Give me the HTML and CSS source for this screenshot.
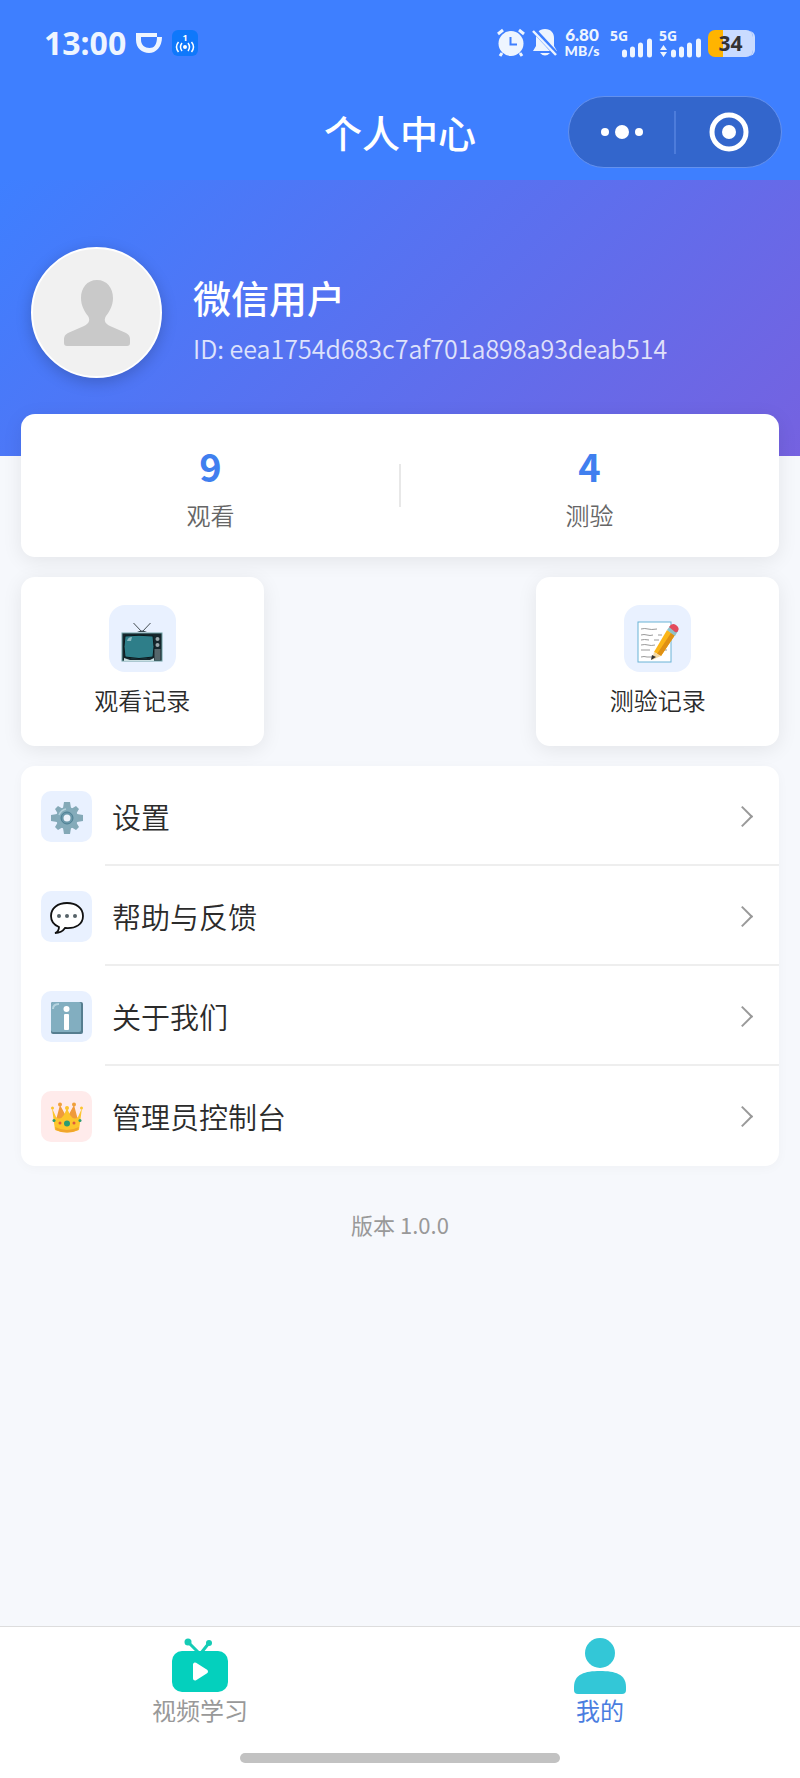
FILE: index.html
```
<!DOCTYPE html>
<html lang="zh-CN">
<head>
    <meta charset="UTF-8">
    <meta name="viewport" content="width=device-width, initial-scale=1.0">
    <title>个人中心</title>
    <link rel="stylesheet" href="styles.css">
</head>
<body>
    <header class="top-bar">
        <div class="status-bar">
            <div class="status-left">
                <span class="clock">13:00</span>
                <svg width="26" height="20" viewBox="0 0 26 20" aria-hidden="true">
                    <path d="M0 0h21v4H5v3c0 5 4 8 8.500 8S21 12 21 4h5c0 10-6 16-13 16S0 15 0 7z" fill="#eef5ff"/>
                </svg>
                <svg class="hotspot" width="26" height="26" viewBox="0 0 26 26" aria-hidden="true">
                    <rect width="26" height="26" rx="6" fill="#0f78fb"/>
                    <text x="13" y="11" text-anchor="middle">1</text>
                    <circle cx="13" cy="17" r="2" fill="#fff"/>
                    <path d="M10 13q-3 4 0 8M16 13q3 4 0 8M6.500 12q-4 5 0 10M19.500 12q4 5 0 10" fill="none" stroke="#fff" stroke-width="1.500"/>
                </svg>
            </div>
            <div class="status-right">
                <svg width="30" height="30" viewBox="0 0 30 30" aria-hidden="true">
                    <circle cx="15" cy="15.500" r="12.500" fill="#eef5ff"/>
                    <path d="M2 6l5-4M28 6l-5-4M6 25l-2 3M24 25l2 3" stroke="#eef5ff" stroke-width="3"/>
                    <path d="M14.500 9v7.500H21" fill="none" stroke="#3e7fff" stroke-width="2"/>
                </svg>
                <svg width="26" height="30" viewBox="0 0 26 30" aria-hidden="true">
                    <path d="M13 1c-6 0-9 4-9 9v8l-3 5h24l-3-5v-8c0-5-3-9-9-9zM8 25h10q-5 5-10 0z" fill="#eef5ff"/>
                    <path d="M1 1l25 27" stroke="#3e7fff" stroke-width="5"/>
                    <path d="M1 3l23 24" stroke="#eef5ff" stroke-width="2.500"/>
                </svg>
                <div class="net-speed"><span>6.80</span><small>MB/s</small></div>
                <svg class="signal" width="42" height="30" viewBox="0 0 42 30" aria-hidden="true">
                    <text x="0" y="13">5G</text>
                    <path d="M14.500 24v3M22.500 21v6M30.500 17v10M39.500 13v14" stroke="#eef5ff" stroke-width="5" stroke-linecap="round"/>
                </svg>
                <svg class="signal" width="42" height="30" viewBox="0 0 42 30" aria-hidden="true">
                    <text x="0" y="13">5G</text>
                    <path d="M1 22l3.500-5 3.500 5zM1 24l3.500 5 3.500-5z" fill="#eef5ff"/>
                    <path d="M14.500 24v3M22.500 21v6M30.500 17v10M39.500 13v14" stroke="#eef5ff" stroke-width="5" stroke-linecap="round"/>
                </svg>
                <div class="battery">34</div>
            </div>
        </div>
        <div class="nav-bar">
            <h1>个人中心</h1>
            <div class="capsule">
                <button type="button" aria-label="更多">
                    <svg width="44" height="40" viewBox="0 0 44 40"><g fill="#fff"><circle cx="5" cy="20" r="4"/><circle cx="22" cy="20" r="7"/><circle cx="39" cy="20" r="4"/></g></svg>
                </button>
                <button type="button" aria-label="关闭">
                    <svg width="40" height="40" viewBox="0 0 40 40"><circle cx="20" cy="20" r="17" fill="none" stroke="#fff" stroke-width="5"/><circle cx="20" cy="20" r="7" fill="#fff"/></svg>
                </button>
            </div>
        </div>
    </header>

    <main>
        <section class="profile">
            <div class="avatar">
                <svg width="66" height="66" viewBox="0 0 66 66" aria-hidden="true">
                    <path d="M33 0c-10 0-16 8-16 18 0 8 4 14 7 18 3 5 0 8-4 10L4 53q-4 2-4 6v4q0 3 3 3h60q3 0 3-3v-4q0-4-4-6l-16-7c-4-2-7-5-4-10 3-4 7-10 7-18C49 8 43 0 33 0z" fill="#c9c9c9"/>
                </svg>
            </div>
            <div class="user-info">
                <h2>微信用户</h2>
                <p>ID: eea1754d683c7af701a898a93deab514</p>
            </div>
        </section>

        <section class="stats card">
            <div class="stat"><strong>9</strong><span>观看</span></div>
            <div class="stat"><strong>4</strong><span>测验</span></div>
        </section>

        <section class="shortcuts">
            <a href="#watch" class="shortcut card">
                <span class="shortcut-icon">
                    <svg width="42" height="42" viewBox="0 0 42 42" aria-hidden="true">
                        <path d="M12.500 2L21 11l8.500-9" fill="none" stroke="#444d52" stroke-width="1"/>
                        <path d="M16 11q5-3 10 0z" fill="#37474f"/>
                        <rect x="1" y="12" width="40" height="28" fill="#16262c" stroke="#6fa0a3"/>
                        <path d="M3 40v-3l6 2h20l4-2v3z" fill="#c9dfe2"/>
                        <path d="M4 15q14-1.500 28 0 2 11 0 21-14 3-28 0-2-10 0-21z" fill="#2e7e89" stroke="#0c171b"/>
                        <path d="M6 20q1-4 5-4l-1 4z" fill="#8abbc2"/>
                        <rect x="33.500" y="28" width="6" height="11" fill="#56666b"/>
                        <circle cx="36.500" cy="18" r="2" fill="#9aa8ac"/>
                        <circle cx="36.500" cy="24" r="2" fill="#9aa8ac"/>
                    </svg>
                </span>
                <span>观看记录</span>
            </a>
            <a href="#quiz" class="shortcut card">
                <span class="shortcut-icon">
                    <svg width="42" height="42" viewBox="0 0 42 42" aria-hidden="true">
                        <rect x="1" y="1" width="33" height="40" fill="#fff" stroke="#6bb3d6"/>
                        <path d="M4 8q4-1 7 0t9 0M4 14q3-1 6 0t6 0M21 14h4M4 19q3-1 8 0M17 19h5M4 24q4-1 7 0t7 0M4 29h9M24 29h6M4 36q3-1 6 0h5" fill="none" stroke="#9a9a9a" stroke-width="1"/>
                        <path d="M17 31L30 9l8 5-14 21z" fill="#fbb518"/>
                        <path d="M20 33L34 12l4 2-14 21z" fill="#df9014"/>
                        <path d="M17 31l7 4-9 4z" fill="#f3d9a4"/>
                        <path d="M15 34l4 2-5 3z" fill="#333"/>
                        <path d="M30 9l3-4 8 5-3 5z" fill="#8fc1c8"/>
                        <path d="M32 6q3-5 7-2t2 6q-1 2-3 1z" fill="#e34b5d"/>
                    </svg>
                </span>
                <span>测验记录</span>
            </a>
        </section>

        <nav class="menu card">
            <a href="#settings" class="menu-item">
                <span class="menu-icon">
                    <svg width="32" height="32" viewBox="0 0 32 32" aria-hidden="true">
                        <path d="M13 0h6l1 6h-8zM13 32h6l1-6h-8zM0 13v6l6 1v-8zM32 13v6l-6 1v-8zM4 7l3-3 5 3-5 5zM28 7l-3-3-5 3 5 5zM4 25l3 3 5-3-5-5zM28 25l-3 3-5-3 5-5z" fill="#84a9b7"/>
                        <circle cx="16" cy="16" r="11" fill="#84abba"/>
                        <circle cx="16" cy="16" r="6" fill="#6b98aa" stroke="#4d7f93" stroke-width="1"/>
                        <path d="M8 13q2-5 7-6" fill="none" stroke="#b4d0db" stroke-width="1.500"/>
                        <circle cx="16" cy="16" r="3.500" fill="#eef3fb"/>
                    </svg>
                </span>
                <span class="menu-label">设置</span>
            </a>
            <a href="#feedback" class="menu-item">
                <span class="menu-icon">
                    <svg width="34" height="34" viewBox="0 0 34 34" aria-hidden="true">
                        <path d="M17 2C8 2 1 7 1 15c0 6 3 9 8 11 0 3-1 5-4 6 5 0 8-2 10-5 11 1 18-4 18-12S26 2 17 2z" fill="#fff" stroke="#111" stroke-width="1.800"/>
                        <g fill="#566268"><circle cx="9" cy="15" r="2"/><circle cx="17" cy="15" r="2"/><circle cx="25" cy="15" r="2"/></g>
                    </svg>
                </span>
                <span class="menu-label">帮助与反馈</span>
            </a>
            <a href="#about" class="menu-item">
                <span class="menu-icon">
                    <svg width="32" height="32" viewBox="0 0 32 32" aria-hidden="true">
                        <rect width="32" height="32" rx="2" fill="#557d8f"/>
                        <rect width="30" height="30" rx="2" fill="#82aec0"/>
                        <path d="M2 7q0-5 6-5" fill="none" stroke="#b5d3df" stroke-width="2"/>
                        <circle cx="15.500" cy="7" r="3" fill="#fff"/>
                        <rect x="13" y="12" width="5" height="16" rx="1" fill="#fff"/>
                    </svg>
                </span>
                <span class="menu-label">关于我们</span>
            </a>
            <a href="#admin" class="menu-item">
                <span class="menu-icon admin">
                    <svg width="32" height="32" viewBox="0 0 32 32" aria-hidden="true">
                        <path d="M5 18L9 3l6 11v4zM17 18v-4l6-11 4 15z" fill="#ef9a3a"/>
                        <path d="M1 6l4 9q4 4 8-2l3-7 3 7q4 6 8 2l4-9-3 22q-12 5-24 0z" fill="#fcc52c"/>
                        <path d="M4 25q12 6 24 0l-1 3q-11 5-22 0z" fill="#f1a52c"/>
                        <g fill="#f0a03a"><circle cx="9" cy="2.500" r="2"/><circle cx="23" cy="2.500" r="2"/></g>
                        <g fill="#fcc52c"><circle cx="1.500" cy="6" r="1.500"/><circle cx="30.500" cy="6" r="1.500"/><circle cx="16" cy="6" r="2"/></g>
                        <g fill="#2b9c72"><circle cx="16" cy="21.500" r="3"/><circle cx="3" cy="18.500" r="1.500"/><circle cx="29" cy="18.500" r="1.500"/></g>
                        <g fill="#dd5a3e"><circle cx="9" cy="21" r="1.500"/><circle cx="23" cy="21" r="1.500"/></g>
                    </svg>
                </span>
                <span class="menu-label">管理员控制台</span>
            </a>
        </nav>

        <p class="version">版本 1.0.0</p>
    </main>

    <footer class="tab-bar">
        <nav class="tabs">
            <a href="#videos" class="tab">
                <svg width="56" height="56" viewBox="0 0 56 56" aria-hidden="true">
                    <path d="M16 4l11 11M37 5l-8 10" stroke="#15cbb5" stroke-width="3"/>
                    <circle cx="16" cy="4" r="3.500" fill="#15cbb5"/>
                    <circle cx="37" cy="5" r="3" fill="#15cbb5"/>
                    <rect y="13" width="56" height="41" rx="10" fill="#04d0bd"/>
                    <path d="M23 26.500v14l11-7z" fill="#fff" stroke="#fff" stroke-width="4" stroke-linejoin="round"/>
                </svg>
                <span>视频学习</span>
            </a>
            <a href="#mine" class="tab active">
                <svg width="56" height="56" viewBox="0 0 56 56" aria-hidden="true">
                    <circle cx="28" cy="15" r="15" fill="#33c7d7"/>
                    <path d="M28 33c15 0 26 3 26 16v3q0 4-4 4H6q-4 0-4-4v-3c0-13 11-16 26-16z" fill="#33c7d7"/>
                </svg>
                <span>我的</span>
            </a>
        </nav>
        <div class="home-indicator"></div>
    </footer>
</body>
</html>
```
FILE: styles.css
```
:root {
    --primary: #3e7fff;
    --page-bg: #f6f8fc;
    --icon-bg: #e9f1ff;
    --text-main: #2b2b2b;
    --text-sub: #666666;
    --text-muted: #999999;
    --status-fg: #eef5ff;
    --radius: 14px;
    --gutter: 21px;
}

* {
    margin: 0;
    padding: 0;
    box-sizing: border-box;
}

body {
    font-family: 'Noto Sans CJK SC', sans-serif;
    min-height: 100vh;
    display: flex;
    flex-direction: column;
    background: var(--page-bg);
    color: var(--text-main);
}

a {
    color: inherit;
    text-decoration: none;
}

svg {
    display: block;
    flex-shrink: 0;
    overflow: visible;
}

/* Status bar and title */
.top-bar {
    background: var(--primary);
    color: #ffffff;
}

.status-bar {
    height: 86px;
    padding: 0 47px 0 44px;
    display: flex;
    align-items: center;
    justify-content: space-between;
    font-family: 'Noto Sans', sans-serif;
    font-weight: 700;
    color: var(--status-fg);
}

.status-left {
    display: flex;
    align-items: center;
    gap: 10px;
}

.clock {
    font-size: 32px;
    line-height: 40px;
}

.hotspot text {
    font-size: 9px;
    fill: #ffffff;
}

.status-right {
    display: flex;
    align-items: center;
    gap: 6px;
}

.net-speed {
    width: 36px;
    margin-right: 4px;
    display: flex;
    flex-direction: column;
    align-items: center;
    font-family: Lato, sans-serif;
    font-weight: 900;
    font-size: 17px;
    line-height: 16px;
}

.net-speed small {
    font-size: 14px;
}

.signal {
    margin-right: 1px;
}

.signal text {
    font-size: 14px;
    fill: var(--status-fg);
}

.battery {
    width: 45px;
    height: 27px;
    border-radius: 7px;
    background: linear-gradient(90deg, #ffb400 15px, #c9dbff 15px);
    box-shadow: 3px 0 0 -1px #c9dbff;
    color: #333333;
    font-size: 21px;
    line-height: 27px;
    text-align: center;
}

.nav-bar {
    height: 94px;
    padding: 0 18px 2px;
    display: grid;
    grid-template-columns: 1fr auto 1fr;
    align-items: center;
}

.nav-bar h1 {
    grid-column: 2;
    font-size: 38px;
    line-height: 56px;
    font-weight: 500;
}

.capsule {
    justify-self: end;
    width: 214px;
    height: 72px;
    display: flex;
    align-items: center;
    border: 1px solid #6491ee;
    border-radius: 36px;
    background: #3366cc;
}

.capsule button {
    flex: 1;
    height: 43px;
    display: flex;
    align-items: center;
    justify-content: center;
    border: none;
    background: none;
    cursor: pointer;
}

.capsule button + button {
    border-left: 2px solid #4d7cdb;
}

/* Profile header */
main {
    flex: 1;
}

.profile {
    padding: 67px 31px 78px;
    display: flex;
    gap: 31px;
    background: linear-gradient(135deg, #3e7fff 0%, #7562e0 100%);
    color: #ffffff;
}

.avatar {
    width: 131px;
    height: 131px;
    flex-shrink: 0;
    display: flex;
    align-items: center;
    justify-content: center;
    border: 2px solid #ffffff;
    border-radius: 50%;
    background: #f1f1f1;
    box-shadow: 0 4px 16px rgba(0, 0, 0, 0.2);
}

.user-info {
    padding-top: 22px;
}

.user-info h2 {
    font-size: 38px;
    line-height: 56px;
    font-weight: 500;
}

.user-info p {
    font-size: 25px;
    line-height: 46px;
    font-weight: 350;
    opacity: 0.8;
}

/* Cards */
.card {
    background: #ffffff;
    border-radius: var(--radius);
    box-shadow: 0 4px 20px rgba(0, 0, 0, 0.08);
}

.stats {
    position: relative;
    margin: -42px var(--gutter) 0;
    padding: 28px 0 17px;
    display: flex;
}

.stat {
    flex: 1;
    display: flex;
    flex-direction: column;
    align-items: center;
}

.stat strong {
    font-size: 38px;
    line-height: 48px;
    color: #407fef;
}

.stat span {
    font-size: 24px;
    line-height: 50px;
    font-weight: 350;
    color: var(--text-sub);
}

/* divider between the two numbers */
.stats::after {
    content: '';
    position: absolute;
    left: 50%;
    top: 50px;
    width: 2px;
    height: 43px;
    margin-left: -1px;
    background: #e8e8e8;
}

.shortcuts {
    margin: 20px var(--gutter);
    display: flex;
    justify-content: space-between;
}

.shortcut {
    width: 32%;
    padding: 28px 0;
    display: flex;
    flex-direction: column;
    align-items: center;
    gap: 10px;
    font-size: 24px;
    line-height: 36px;
    font-weight: 350;
}

.shortcut-icon {
    width: 67px;
    height: 67px;
    padding-top: 6px;
    display: flex;
    align-items: center;
    justify-content: center;
    border-radius: 16px;
    background: var(--icon-bg);
}

.menu {
    margin: 0 var(--gutter);
    box-shadow: 0 2px 12px rgba(0, 0, 0, 0.03);
}

.menu-item {
    position: relative;
    height: 100px;
    padding: 0 29px 0 20px;
    display: flex;
    align-items: center;
    gap: 20px;
}

.menu-item:not(:last-child)::before {
    content: '';
    position: absolute;
    left: 84px;
    right: 0;
    bottom: 0;
    height: 2px;
    background: #eeeeee;
}

.menu-item::after {
    content: '';
    width: 15px;
    height: 15px;
    border-top: 2px solid var(--text-muted);
    border-right: 2px solid var(--text-muted);
    transform: rotate(45deg);
    box-sizing: border-box;
}

.menu-icon {
    width: 51px;
    height: 51px;
    padding-top: 4px;
    display: flex;
    align-items: center;
    justify-content: center;
    border-radius: 10px;
    background: var(--icon-bg);
}

.menu-icon.admin {
    background: #ffebeb;
}

.menu-label {
    flex: 1;
    font-size: 29px;
    line-height: 44px;
    font-weight: 350;
}

.version {
    margin: 41px 0;
    font-size: 22px;
    line-height: 34px;
    text-align: center;
    color: var(--text-muted);
}

/* Bottom tabs */
.tab-bar {
    padding: 11px 0 15px;
    border-top: 1px solid #dddddd;
    background: #ffffff;
}

.tabs {
    display: flex;
}

.tab {
    flex: 1;
    display: flex;
    flex-direction: column;
    align-items: center;
    font-size: 24px;
    line-height: 32px;
    color: var(--text-muted);
}

.tab.active {
    color: #4a7de0;
}

.home-indicator {
    width: 40%;
    height: 10px;
    margin: 27px auto 0;
    border-radius: 5px;
    background: #c2c2c2;
}
```
